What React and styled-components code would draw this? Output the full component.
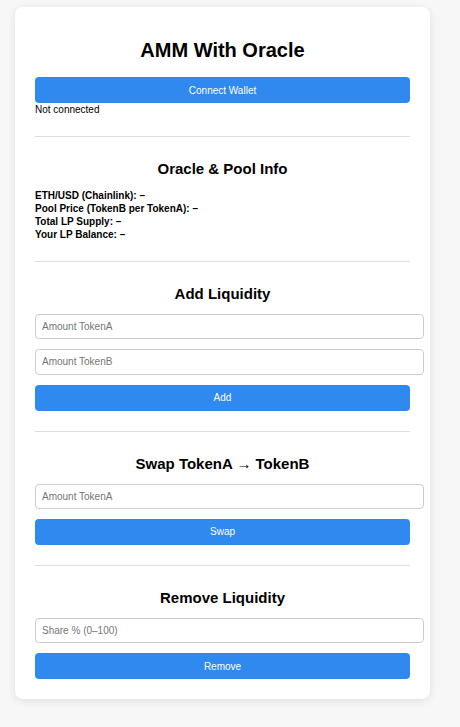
import React from "react"
import styled, { createGlobalStyle } from "styled-components"

const GlobalStyle = createGlobalStyle`
  html, body {
    margin: 0;
    padding: 0;
    background: #f7f7f7;
    font-family: "Liberation Sans", Arial, sans-serif;
    color: #000;
  }
`

const Page = styled.div`
  padding: 7px 30px 28px 15px;
`

const Card = styled.div`
  width: 415px;
  box-sizing: border-box;
  background: #fff;
  border-radius: 8px;
  padding: 20px;
  box-shadow: 0 2px 8px rgba(0, 0, 0, 0.1);
`

const Title = styled.h1`
  font-size: 20px;
  line-height: 24px;
  font-weight: bold;
  text-align: center;
  margin: 11px 0 15px;
`

const Heading = styled.h2`
  font-size: 15px;
  line-height: 18px;
  font-weight: bold;
  text-align: center;
  margin: 23px 0 11px;
`

const Button = styled.button`
  display: block;
  width: 100%;
  height: 26px;
  border: none;
  border-radius: 4px;
  background: #2f89ee;
  color: #fff;
  font-family: inherit;
  font-size: 10px;
  cursor: pointer;
`

const Status = styled.div`
  font-size: 10px;
  line-height: 13px;
  margin-bottom: 20px;
`

const Divider = styled.hr`
  border: none;
  border-top: 1px solid #ddd;
  margin: 0;
`

const InfoList = styled.div`
  margin-bottom: 20px;
`

const InfoLine = styled.div`
  font-size: 10px;
  line-height: 13px;
  font-weight: bold;
`

const Input = styled.input`
  display: block;
  width: 100%;
  margin: 0 0 10px;
  padding: 6px;
  border: 1px solid #ccc;
  border-radius: 4px;
  font-family: inherit;
  font-size: 10px;
  line-height: 11.25px;
  &::placeholder {
    color: #757575;
  }
`

const Section = styled.section`
  padding-bottom: ${p => (p.$last ? 0 : 20)}px;
`

const info = [
  "ETH/USD (Chainlink): –",
  "Pool Price (TokenB per TokenA): –",
  "Total LP Supply: –",
  "Your LP Balance: –",
]

export default function App() {
  return (
    <Page>
      <GlobalStyle />
      <Card>
        <Title>AMM With Oracle</Title>
        <Button>Connect Wallet</Button>
        <Status>Not connected</Status>
        <Divider />

        <Heading>Oracle &amp; Pool Info</Heading>
        <InfoList>
          {info.map(t => (
            <InfoLine key={t}>{t}</InfoLine>
          ))}
        </InfoList>
        <Divider />

        <Section>
          <Heading>Add Liquidity</Heading>
          <Input placeholder="Amount TokenA" />
          <Input placeholder="Amount TokenB" />
          <Button>Add</Button>
        </Section>
        <Divider />

        <Section>
          <Heading>Swap TokenA → TokenB</Heading>
          <Input placeholder="Amount TokenA" />
          <Button>Swap</Button>
        </Section>
        <Divider />

        <Section $last>
          <Heading>Remove Liquidity</Heading>
          <Input placeholder="Share % (0–100)" />
          <Button>Remove</Button>
        </Section>
      </Card>
    </Page>
  )
}
